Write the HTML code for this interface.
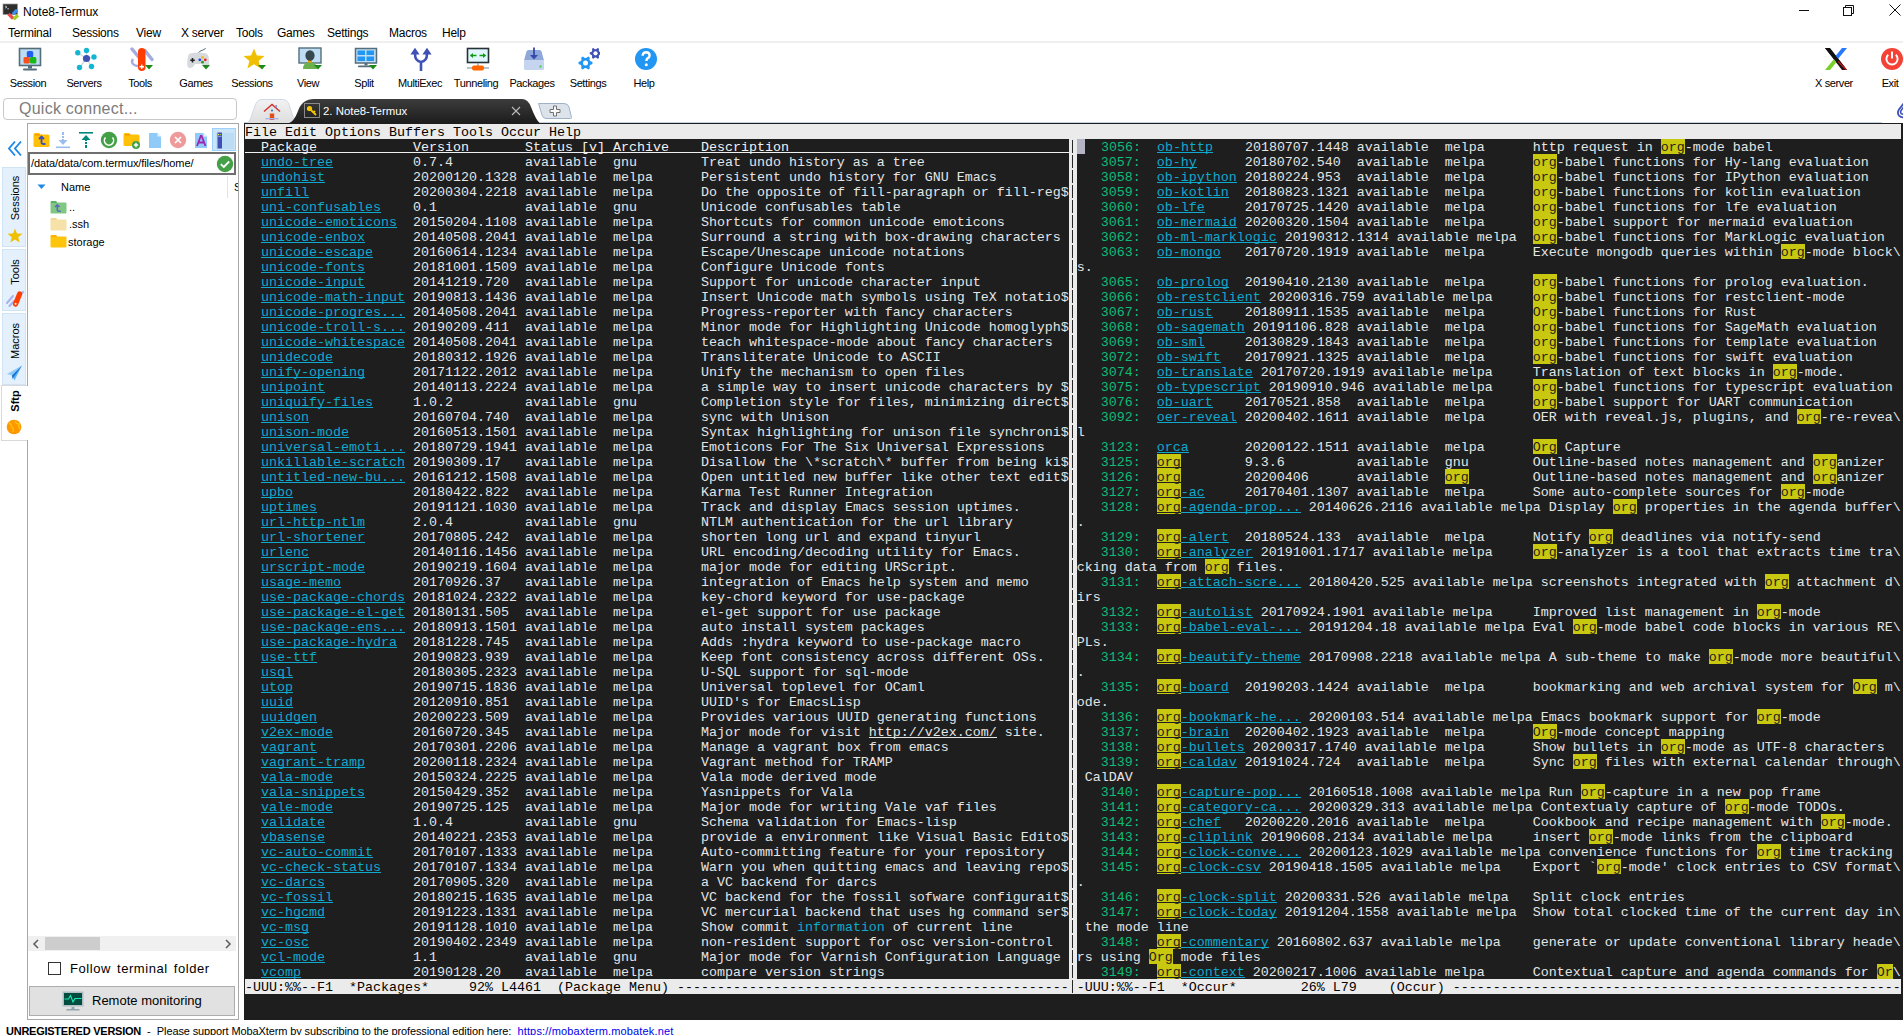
<!DOCTYPE html><html><head><meta charset="utf-8"><style>
*{box-sizing:border-box}
html,body{margin:0;padding:0}
body{width:1903px;height:1035px;position:relative;overflow:hidden;background:#fff;font-family:"Liberation Sans",sans-serif;color:#000}
.a{position:absolute;display:block}
#term{position:absolute;left:244px;top:123px;width:1659px;height:897px;background:#1e1e1e}
.b{position:absolute;height:15px;display:block}
.u{position:absolute;height:1px;display:block}
.lt{background:#ebebeb}
.yl{background:#c8c810}
.cu{background:#b4b4c4}
.hu{background:#f0f0f0}
.vb{position:absolute;display:block;left:1072px;width:1px;height:13px;background:#262626}
.lu{background:#11a8cd}
.du{background:#1e1e1e}
.nu{background:#e5e5e5}
.tr{position:absolute;left:245px;height:15px;line-height:17px;white-space:pre;font-family:"Liberation Mono",monospace;font-size:13.333px;color:#e5e5e5}
.tr .m{color:#000}
.tr .h{color:#f2f2f2}
.tr .l{color:#11a8cd}
.tr .g{color:#0dbc79}
.tr .hk{color:#1e1e1e}
.t12{font-size:12px;line-height:16px;white-space:nowrap}
.tl{top:77px;width:80px;text-align:center;font-size:11px;line-height:13px;white-space:nowrap;letter-spacing:-0.4px}
.vt{width:80px;height:16px;line-height:16px;text-align:center;font-size:11px;transform:rotate(-90deg);white-space:nowrap}
</style></head><body>
<svg class="a" style="left:2px;top:3px" width="18" height="17" viewBox="0 0 18 17"><rect x="1" y="1" width="14.5" height="10.5" fill="#2e2e2e" stroke="#9a9a9a" stroke-width="0.7"/><path d="M3 2.8 L5 4 L3 5.2 M5.2 5.8 H7" stroke="#ddd" stroke-width="0.8" fill="none"/><path d="M6.5 10.8 L11.2 15.5" stroke="#e84b4b" stroke-width="3.2"/><path d="M10.8 11.2 L15.2 7" stroke="#3c8ef0" stroke-width="3.2"/><path d="M11.5 16.3 L16 12.2" stroke="#9fd022" stroke-width="3.2"/></svg>
<div class="a t12" style="left:23px;top:4px">Note8-Termux</div>
<div class="a" style="left:1799px;top:10px;width:10px;height:1px;background:#111"></div>
<svg class="a" style="left:1843px;top:4px" width="12" height="12" viewBox="0 0 12 12"><path d="M2.5 3.5 V1.5 H10.5 V9.5 H8.5" stroke="#111" fill="none"/><rect x="0.5" y="3.5" width="8" height="8" stroke="#111" fill="none"/></svg>
<svg class="a" style="left:1889px;top:4px" width="12" height="12" viewBox="0 0 12 12"><path d="M0.5 0.5 L11.5 11.5 M11.5 0.5 L0.5 11.5" stroke="#111" stroke-width="1"/></svg>
<div class="a t12" style="left:8px;top:25px;letter-spacing:-0.25px">Terminal</div>
<div class="a t12" style="left:72px;top:25px;letter-spacing:-0.25px">Sessions</div>
<div class="a t12" style="left:136px;top:25px;letter-spacing:-0.25px">View</div>
<div class="a t12" style="left:181px;top:25px;letter-spacing:-0.25px">X server</div>
<div class="a t12" style="left:236px;top:25px;letter-spacing:-0.25px">Tools</div>
<div class="a t12" style="left:277px;top:25px;letter-spacing:-0.25px">Games</div>
<div class="a t12" style="left:327px;top:25px;letter-spacing:-0.25px">Settings</div>
<div class="a t12" style="left:389px;top:25px;letter-spacing:-0.25px">Macros</div>
<div class="a t12" style="left:442px;top:25px;letter-spacing:-0.25px">Help</div>
<div class="a" style="left:0;top:41px;width:1903px;height:2px;background:#efefef"></div>
<div class="a tl" style="left:-12px">Session</div>
<div class="a tl" style="left:44px">Servers</div>
<div class="a tl" style="left:100px">Tools</div>
<div class="a tl" style="left:156px">Games</div>
<div class="a tl" style="left:212px">Sessions</div>
<div class="a tl" style="left:268px">View</div>
<div class="a tl" style="left:324px">Split</div>
<div class="a tl" style="left:380px">MultiExec</div>
<div class="a tl" style="left:436px">Tunneling</div>
<div class="a tl" style="left:492px">Packages</div>
<div class="a tl" style="left:548px">Settings</div>
<div class="a tl" style="left:604px">Help</div>
<div class="a tl" style="left:1794px">X server</div>
<div class="a tl" style="left:1850px">Exit</div>
<svg class="a" style="left:18px;top:47px" width="24" height="24" viewBox="0 0 24 24"><rect x="1.5" y="1.5" width="21" height="17" fill="#bfdcf5" stroke="#546e7a" stroke-width="1.6"/><rect x="10" y="19" width="4" height="2.5" fill="#546e7a"/><rect x="5" y="21.5" width="14" height="2" rx="1" fill="#546e7a"/><rect x="8.8" y="4" width="6.4" height="6.4" rx="1.5" fill="#1e5ff0"/><rect x="5.5" y="10" width="6.4" height="6.4" rx="1.5" fill="#f4511e"/><rect x="12" y="10" width="6.4" height="6.4" rx="1.5" fill="#18b818"/></svg>
<svg class="a" style="left:74px;top:47px" width="24" height="24" viewBox="0 0 24 24"><g stroke="#cfd8dc" stroke-width="1.3"><line x1="12.5" y1="11.5" x2="3.8" y2="5.8"/><line x1="12.5" y1="11.5" x2="12.5" y2="3.5"/><line x1="12.5" y1="11.5" x2="20" y2="10"/><line x1="12.5" y1="11.5" x2="5.5" y2="20.5"/><line x1="12.5" y1="11.5" x2="17.5" y2="19.5"/></g><g fill="#13b6d2"><circle cx="3.8" cy="5.8" r="2.7"/><circle cx="12.5" cy="3.5" r="2.7"/><circle cx="20" cy="10" r="2.7"/><circle cx="5.5" cy="20.5" r="2.7"/><circle cx="17.5" cy="19.5" r="2.7"/></g><circle cx="12.5" cy="11.5" r="3.6" fill="#3f51b5"/></svg>
<svg class="a" style="left:128px;top:47px" width="26" height="25" viewBox="0 0 26 25"><path d="M4 2 L11 10.5" stroke="#a4acdf" stroke-width="3.4" stroke-linecap="round"/><path d="M17 3.5 L24 12.5" stroke="#a4acdf" stroke-width="3.4" stroke-linecap="round"/><path d="M5 12 Q3 15 5 17 Q7 19 10 19" stroke="#a4acdf" stroke-width="2.4" fill="none"/><rect x="10" y="1" width="7.5" height="23" rx="3.75" fill="#ff3d00"/><path d="M13.75 17.5v4.5M11.5 19.75h4.5" stroke="#fff" stroke-width="1.4"/></svg>
<svg class="a" style="left:145px;top:65px" width="8" height="5" viewBox="0 0 8 5"><path d="M0 0h8l-4 4.5z" fill="#1b8a1b"/></svg>
<svg class="a" style="left:186px;top:47px" width="26" height="24" viewBox="0 0 26 24"><path d="M12.5 6 Q13 4 17 3 Q19 2.5 19.5 1" stroke="#546e7a" stroke-width="1" fill="none"/><path d="M4 6.5 Q12 4.5 20 6.5 Q23 7 23.2 15 Q23.5 21 20.5 21 Q18 21 16 17 H9 Q7 21 4 21 Q0.8 21 1.3 15 Q1.6 7 4 6.5z" fill="#d6d9dd"/><path d="M6.5 11v4.5M4.3 13.2h4.5" stroke="#222" stroke-width="1.6"/><circle cx="16.5" cy="10.3" r="1.4" fill="#e8c020"/><circle cx="13.8" cy="12.8" r="1.4" fill="#2040f0"/><circle cx="19.3" cy="12.8" r="1.4" fill="#f02020"/><circle cx="16.5" cy="15.2" r="1.4" fill="#20a020"/></svg>
<svg class="a" style="left:202px;top:65px" width="8" height="5" viewBox="0 0 8 5"><path d="M0 0h8l-4 4.5z" fill="#1b8a1b"/></svg>
<svg class="a" style="left:242px;top:47px" width="24" height="24" viewBox="0 0 24 24"><path d="M12 1.5 L14.9 8.6 L22.5 9 L16.6 13.9 L18.6 21.5 L12 17.3 L5.4 21.5 L7.4 13.9 L1.5 9 L9.1 8.6z" fill="#f0c000"/></svg>
<svg class="a" style="left:258px;top:65px" width="8" height="5" viewBox="0 0 8 5"><path d="M0 0h8l-4 4.5z" fill="#1b8a1b"/></svg>
<svg class="a" style="left:298px;top:47px" width="24" height="24" viewBox="0 0 24 24"><rect x="1" y="1" width="22" height="15" fill="#bfdcf5" stroke="#546e7a" stroke-width="1.4"/><path d="M5 22 Q5 15 12 15 Q19 15 19 22z" fill="#6ab04c"/><rect x="10" y="12.5" width="4" height="3" fill="#f59b00"/><ellipse cx="12" cy="8.5" rx="4.6" ry="5.3" fill="#37474f"/></svg>
<svg class="a" style="left:314px;top:65px" width="8" height="5" viewBox="0 0 8 5"><path d="M0 0h8l-4 4.5z" fill="#1b8a1b"/></svg>
<svg class="a" style="left:354px;top:47px" width="24" height="24" viewBox="0 0 24 24"><rect x="1.5" y="1.5" width="21" height="14.5" fill="#bfdcf5" stroke="#546e7a" stroke-width="1.5"/><g fill="#2196f3"><rect x="3.5" y="3.5" width="7.5" height="4.5"/><rect x="12.5" y="3.5" width="7.5" height="4.5"/><rect x="3.5" y="9.5" width="7.5" height="4.5"/><rect x="12.5" y="9.5" width="7.5" height="4.5"/></g><rect x="10.5" y="16" width="3" height="2.5" fill="#546e7a"/><rect x="4" y="18.5" width="16" height="1.8" rx="0.9" fill="#546e7a"/></svg>
<svg class="a" style="left:369px;top:65px" width="8" height="5" viewBox="0 0 8 5"><path d="M0 0h8l-4 4.5z" fill="#1b8a1b"/></svg>
<svg class="a" style="left:409px;top:47px" width="24" height="25" viewBox="0 0 24 25"><path d="M12 24 V15 M12 15 Q6 14 6 7 M12 15 Q18 14 18 7" stroke="#3f51b5" stroke-width="2.6" fill="none"/><path d="M6 0.8 L10.6 7.6 H1.4z M18 0.8 L22.6 7.6 H13.4z" fill="#3f51b5"/></svg>
<svg class="a" style="left:466px;top:47px" width="24" height="25" viewBox="0 0 24 25"><rect x="1.5" y="1.5" width="21" height="14" fill="#e1f5fe" stroke="#263238" stroke-width="1.6"/><path d="M4.5 8.5h6M13.5 8.5h6" stroke="#0c9c0c" stroke-width="1.6"/><path d="M4 8.5 L7 6 V11z M20 8.5 L17 6 V11z" fill="#0c9c0c"/><rect x="11.3" y="16" width="1.4" height="4" fill="#90a4ae"/><rect x="1" y="20.3" width="22" height="1.3" fill="#90a4ae"/><rect x="6" y="18.5" width="12" height="5" rx="2" fill="#ff6600"/></svg>
<svg class="a" style="left:522px;top:47px" width="24" height="25" viewBox="0 0 24 25"><path d="M4.5 4.5 Q5 3 6.5 3 H17.5 Q19 3 19.5 4.5 L22 13.5 H2z" fill="#8ea8d9"/><rect x="2" y="13.5" width="20" height="9.5" rx="1.5" fill="#c5d5f0"/><rect x="17.5" y="18.5" width="2" height="2" fill="#43d043"/><path d="M12 0.5 V10" stroke="#3949ab" stroke-width="1.8"/><path d="M8 8 L12 12.5 L16 8z" fill="#3949ab"/></svg>
<svg class="a" style="left:576px;top:47px" width="24" height="25" viewBox="0 0 24 25"><polygon points="16.44,15.09 16.44,16.92 14.15,17.93 13.50,19.07 13.76,21.56 12.17,22.47 10.15,21.00 8.84,21.00 6.82,22.46 5.23,21.55 5.50,19.06 4.84,17.92 2.56,16.91 2.56,15.08 4.85,14.07 5.50,12.93 5.24,10.44 6.83,9.53 8.85,11.00 10.16,11.00 12.18,9.54 13.77,10.45 13.50,12.94 14.16,14.08" fill="#2196f3"/><circle cx="9.5" cy="16" r="2.52" fill="#fff"/><polygon points="25.25,5.55 25.25,7.06 23.36,7.90 22.81,8.85 23.03,10.90 21.71,11.66 20.04,10.44 18.95,10.44 17.28,11.66 15.97,10.90 16.18,8.84 15.64,7.89 13.75,7.05 13.75,5.54 15.64,4.70 16.19,3.75 15.97,1.70 17.29,0.94 18.96,2.16 20.05,2.16 21.72,0.94 23.03,1.70 22.82,3.76 23.36,4.71" fill="#3f51b5"/><circle cx="19.5" cy="6.3" r="2.088" fill="#fff"/></svg>
<svg class="a" style="left:634px;top:47px" width="24" height="24" viewBox="0 0 24 24"><circle cx="12" cy="12" r="11" fill="#2196f3"/><path d="M8.6 8.8 Q8.8 5.2 12.2 5.2 Q15.6 5.3 15.6 8.4 Q15.6 10.3 13.5 11.4 Q12.4 12 12.4 14" stroke="#fff" stroke-width="2.4" fill="none"/><circle cx="12.3" cy="17.8" r="1.5" fill="#fff"/></svg>
<svg class="a" style="left:1824px;top:47px" width="24" height="24" viewBox="0 0 24 24"><path d="M1 1 H6 L23 23 H18z" fill="#111"/><path d="M18 1 H23 L14 12 L11.5 9z" fill="#2979ff"/><path d="M6 23 H1 L10 12 L12.5 15z" fill="#76d12a"/><path d="M14 12 L23 23 H19 L12.5 15z" fill="#e21b1b" opacity="0.9"/><path d="M1 1 H5.5 L23 23 H19z" fill="#111"/><path d="M14.5 14 L23 23 H21.5 L14 15z" fill="#e21b1b"/></svg>
<svg class="a" style="left:1880px;top:47px" width="23" height="24" viewBox="0 0 23 24"><circle cx="12" cy="12" r="11" fill="#f44336"/><path d="M8.2 7.8 A5.6 5.6 0 1 0 15.8 7.8" stroke="#fff" stroke-width="1.9" fill="none"/><path d="M12 4.5 V11.5" stroke="#fff" stroke-width="1.9"/></svg>
<svg class="a" style="left:1896px;top:101px" width="7" height="18" viewBox="0 0 7 18"><path d="M7.5 2.5 L2.8 8.8 Q0.9 12 3 14.6 Q5 16.6 7.5 16.3" stroke="#3f51b5" stroke-width="1.8" fill="none"/><path d="M7.5 6.2 L5 9.6 Q4.1 11.4 5.2 12.6 Q6.2 13.4 7.5 13.2" stroke="#3f51b5" stroke-width="1.6" fill="none"/></svg>
<div class="a" style="left:244px;top:122px;width:1638px;height:1px;background:#c3d3e3"></div>
<div class="a" style="left:3px;top:98px;width:234px;height:22px;border:1px solid #c8c8c8;border-radius:4px;background:#fff"></div>
<div class="a" style="left:19px;top:99px;font-size:16px;line-height:20px;color:#7c7c7c;letter-spacing:0.25px">Quick connect...</div>
<svg class="a" style="left:244px;top:98px" width="330" height="26" viewBox="0 0 330 26"><path d="M1.5 25.5 Q5 25 6.5 20.5 L11.5 6.5 Q13.5 1.5 18 1.5 H38.5 Q43 1.5 45 6.5 L49.5 20.5 Q51 25 53 25.5z" fill="url(#hg)" stroke="#cdd9e6" stroke-width="1"/><defs><linearGradient id="dg" x1="0" y1="0" x2="0" y2="1"><stop offset="0" stop-color="#3c3c3c"/><stop offset="1" stop-color="#1c1c1c"/></linearGradient><linearGradient id="hg" x1="0" y1="0" x2="0" y2="1"><stop offset="0" stop-color="#f2f2f2"/><stop offset="1" stop-color="#dedede"/></linearGradient></defs><path d="M44 25.5 Q50 24 54 13 Q58 1 70 1 H278 Q284 1 287 9 Q292 22 296 25.5z" fill="url(#dg)"/><path d="M294.5 5.5 H320 Q324 5.5 325 9 L327.5 19.5 Q328 20.5 326.5 20.5 H302 Q299 20.5 298 17z" fill="#dde3ea" stroke="#9fb3c8" stroke-width="1"/></svg>
<svg class="a" style="left:263px;top:102px" width="18" height="19" viewBox="0 0 18 19"><path d="M3 10 V17 H15 V10 L9 4z" fill="#e3e3e3"/><rect x="6.8" y="11.5" width="4.4" height="6.5" fill="#e64a19"/><rect x="2.5" y="16" width="13" height="1.4" fill="#aab4f0"/><path d="M1 9.5 L9 2.5 L17 9.5" stroke="#d32f2f" stroke-width="1.4" fill="none"/><rect x="12.5" y="3" width="1.3" height="3" fill="#7986cb"/><circle cx="9" cy="8.5" r="0.9" fill="#1565c0"/></svg>
<div class="a" style="left:304px;top:103px;width:16px;height:15px;border:1px solid #8a8a8a"></div>
<svg class="a" style="left:305px;top:104px" width="14" height="13" viewBox="0 0 14 13"><circle cx="4.5" cy="4.5" r="2.6" fill="#f5c400"/><path d="M5.5 5.5 L11 11 M8.5 8.5 L10 7" stroke="#f5c400" stroke-width="1.8"/></svg>
<div class="a" style="left:323px;top:103px;font-size:11.4px;line-height:16px;color:#fff">2. Note8-Termux</div>
<svg class="a" style="left:511px;top:106px" width="10" height="10" viewBox="0 0 10 10"><path d="M1 1 L9 9 M9 1 L1 9" stroke="#bbb" stroke-width="1.1"/></svg>
<svg class="a" style="left:549px;top:105px" width="12" height="12" viewBox="0 0 12 12"><path d="M4.5 1 H7.5 V4.5 H11 V7.5 H7.5 V11 H4.5 V7.5 H1 V4.5 H4.5z" fill="#fafafa" stroke="#707070" stroke-width="1"/></svg>
<svg class="a" style="left:7px;top:140px" width="16" height="17" viewBox="0 0 16 17"><path d="M8 1.5 L2 8.5 L8 15.5 M14 1.5 L8 8.5 L14 15.5" stroke="#1e88e5" stroke-width="1.9" fill="none"/></svg>
<div class="a" style="left:2px;top:167px;width:24px;height:80px;background:#e4f0fb;border:1px solid #d0e3f5"></div>
<div class="a" style="left:2px;top:249px;width:24px;height:62px;background:#e4f0fb;border:1px solid #d0e3f5"></div>
<div class="a" style="left:2px;top:313px;width:24px;height:72px;background:#e4f0fb;border:1px solid #d0e3f5"></div>
<div class="a" style="left:1px;top:385px;width:28px;height:56px;background:#fff;border:1px solid #d9d9d9;border-right:none"></div>
<div class="a vt" style="left:-25px;top:190px;">Sessions</div>
<div class="a vt" style="left:-25px;top:264px;">Tools</div>
<div class="a vt" style="left:-25px;top:333px;">Macros</div>
<div class="a vt" style="left:-25px;top:393px;font-weight:bold;">Sftp</div>
<svg class="a" style="left:7px;top:228px" width="16" height="15" viewBox="0 0 16 15"><path d="M8 0.5 L10 5.5 L15.5 5.8 L11.2 9.2 L12.7 14.5 L8 11.5 L3.3 14.5 L4.8 9.2 L0.5 5.8 L6 5.5z" fill="#f0c000"/></svg>
<svg class="a" style="left:5px;top:289px" width="19" height="19" viewBox="0 0 19 19"><path d="M2 14 L8 7 M4.5 17 L9 12 M12 9 L18 3" stroke="#aab2e8" stroke-width="2" stroke-linecap="round"/><g transform="rotate(22 12.5 10)"><rect x="10" y="2" width="5.2" height="16" rx="2.6" fill="#ff3d00"/><circle cx="12.6" cy="15.2" r="1" fill="#fff"/></g></svg>
<svg class="a" style="left:6px;top:365px" width="17" height="16" viewBox="0 0 17 16"><path d="M16 0.5 L1 9 L6 10.5z" fill="#90caf9"/><path d="M16 0.5 L6 10.5 L8.5 15.5z" fill="#64b5f6"/><path d="M16 0.5 L6 10.5 L6.5 14z" fill="#1976d2"/></svg>
<svg class="a" style="left:6px;top:419px" width="16" height="16" viewBox="0 0 16 16"><circle cx="8" cy="8" r="7.3" fill="#ff9800"/><path d="M3 4 Q6 5 5.5 8 Q8 9 7 13 M9 2 Q10 5 13 5 Q12 8 14 10" stroke="#ffc107" stroke-width="1.4" fill="none"/></svg>
<div class="a" style="left:27px;top:123px;width:212px;height:897px;border:1px solid #a8a8a8;background:#fff"></div>
<div class="a" style="left:26px;top:386px;width:3px;height:54px;background:#fff"></div>
<svg class="a" style="left:33px;top:131px" width="17" height="17" viewBox="0 0 17 17"><path d="M0.5 3.5 Q0.5 2 2 2 H6 L7.5 3.5 H15 Q16.5 3.5 16.5 5 V15 Q16.5 16 15 16 H2 Q0.5 16 0.5 15z" fill="#ffc107"/><path d="M2 3 H6.5 L8 4.5 H2z" fill="#ff9800"/><path d="M6 8 L8.5 5.5 L11 8 M8.5 6 V11.5 Q8.5 13 10.5 13 H12.5" stroke="#3f51b5" stroke-width="1.8" fill="none"/></svg>
<svg class="a" style="left:55px;top:131px" width="16" height="18" viewBox="0 0 16 18"><path d="M8 1 V4 M8 5 V7 M8 8 V12" stroke="#9bbcef" stroke-width="2"/><path d="M3.5 9 L8 14 L12.5 9z" fill="#9bbcef"/><rect x="1" y="15.5" width="14" height="1.6" fill="#9bbcef"/></svg>
<svg class="a" style="left:78px;top:131px" width="16" height="18" viewBox="0 0 16 18"><rect x="1" y="1" width="14" height="1.6" fill="#00897b"/><path d="M3.5 9 L8 4 L12.5 9z" fill="#00897b"/><path d="M8 8 V10 M8 11 V13 M8 14 V17" stroke="#00897b" stroke-width="2"/></svg>
<svg class="a" style="left:100px;top:131px" width="18" height="18" viewBox="0 0 18 18"><circle cx="9" cy="9" r="8.2" fill="#43a047"/><path d="M5.5 6.5 A4.6 4.6 0 1 0 12.5 6.5" stroke="#fff" stroke-width="1.6" fill="none"/></svg>
<svg class="a" style="left:123px;top:131px" width="18" height="18" viewBox="0 0 18 18"><path d="M0.5 3.5 Q0.5 2 2 2 H6 L7.5 3.5 H15 Q16.5 3.5 16.5 5 V14 Q16.5 15 15 15 H2 Q0.5 15 0.5 14z" fill="#ffc107"/><path d="M2 3 H6.5 L8 4.5 H2z" fill="#ff9800"/><circle cx="13" cy="14" r="4" fill="#43a047"/><path d="M13 11.8 V16.2 M10.8 14 H15.2" stroke="#fff" stroke-width="1.4"/></svg>
<svg class="a" style="left:148px;top:131px" width="14" height="18" viewBox="0 0 14 18"><path d="M1 2 H9.5 L13 5.5 V17 H1z" fill="#90caf9"/><path d="M9.5 2 V5.5 H13z" fill="#e3f2fd"/></svg>
<svg class="a" style="left:169px;top:131px" width="18" height="18" viewBox="0 0 18 18"><circle cx="9" cy="9" r="8.2" fill="#ef9a9a"/><path d="M6 6 L12 12 M12 6 L6 12" stroke="#fff" stroke-width="1.7"/></svg>
<svg class="a" style="left:194px;top:131px" width="14" height="18" viewBox="0 0 14 18"><path d="M1 2 H9.5 L13 5.5 V17 H1z" fill="#90caf9"/><path d="M9.5 2 V5.5 H13z" fill="#e3f2fd"/><path d="M3 15 L6.8 5 H7.6 L11.5 15 M4.5 11.5 H10" stroke="#9c27b0" stroke-width="1.8" fill="none"/></svg>
<div class="a" style="left:212px;top:128px;width:24px;height:23px;background:#cce4f7;border:1px solid #99d1ff"></div>
<div class="a" style="left:216px;top:133px;width:18px;height:16px;background:#bcdcf5"></div>
<svg class="a" style="left:217px;top:132px" width="6" height="17" viewBox="0 0 6 17"><rect x="0.5" y="0.5" width="4.5" height="16" fill="#3f4fb5"/><rect x="1" y="2" width="1.2" height="1.2" fill="#ffeb3b"/><rect x="3" y="2" width="1.2" height="1.2" fill="#8bc34a"/><rect x="1" y="4" width="3.5" height="0.8" fill="#9fa8da"/></svg>
<div class="a" style="left:28px;top:152px;width:208px;height:23px;border:2px solid #6f6f6f;background:#fff"></div>
<div class="a" style="left:31px;top:157px;font-size:11px;line-height:13px;letter-spacing:-0.1px">/data/data/com.termux/files/home/</div>
<svg class="a" style="left:216px;top:155px" width="18" height="18" viewBox="0 0 18 18"><circle cx="9" cy="9" r="8.2" fill="#43a047"/><path d="M4.8 9.2 L7.8 12 L13.2 6.5" stroke="#fff" stroke-width="1.8" fill="none"/></svg>
<svg class="a" style="left:37px;top:184px" width="9" height="6" viewBox="0 0 9 6"><path d="M0.5 0.5 H8.5 L4.5 5z" fill="#1e88e5"/></svg>
<div class="a" style="left:61px;top:181px;font-size:11px;line-height:13px">Name</div>
<div class="a" style="left:227px;top:176px;width:1px;height:22px;background:#e5e5e5"></div>
<div class="a" style="left:234px;top:181px;width:4px;overflow:hidden;font-size:11px;line-height:13px">S</div>
<svg class="a" style="left:50px;top:200px" width="17" height="15" viewBox="0 0 17 15"><path d="M0.5 2 Q0.5 1 1.5 1 H6 L7.5 2.5 H15.5 Q16.5 2.5 16.5 3.5 V12.5 Q16.5 13.5 15.5 13.5 H1.5 Q0.5 13.5 0.5 12.5z" fill="#81c784"/><path d="M1 1.5 H6 L7 2.5 H1z" fill="#2e9e3e"/><path d="M5 7 L7.3 4.8 L9.6 7 M7.3 5.2 V10 Q7.3 11.3 9 11.3 H10.8" stroke="#5c6bc0" stroke-width="1.6" fill="none"/></svg>
<div class="a" style="left:69px;top:201px;font-size:11px;line-height:13px">..</div>
<svg class="a" style="left:50px;top:217px" width="17" height="14" viewBox="0 0 17 14"><path d="M0.5 2 Q0.5 1 1.5 1 H6 L7.5 2.5 H15.5 Q16.5 2.5 16.5 3.5 V12.5 Q16.5 13.5 15.5 13.5 H1.5 Q0.5 13.5 0.5 12.5z" fill="#f6e2a8"/><path d="M1 1.5 H6 L7 2.5 H1z" fill="#f3cd82"/></svg>
<div class="a" style="left:69px;top:218px;font-size:11px;line-height:13px">.ssh</div>
<svg class="a" style="left:50px;top:234px" width="17" height="14" viewBox="0 0 17 14"><path d="M0.5 2 Q0.5 1 1.5 1 H6 L7.5 2.5 H15.5 Q16.5 2.5 16.5 3.5 V12.5 Q16.5 13.5 15.5 13.5 H1.5 Q0.5 13.5 0.5 12.5z" fill="#ffc40c"/><path d="M1 1.5 H6 L7 2.5 H1z" fill="#ff9a00"/></svg>
<div class="a" style="left:68px;top:236px;font-size:11px;line-height:13px">storage</div>
<div class="a" style="left:28px;top:936px;width:208px;height:15px;background:#f0f0f0"></div>
<div class="a" style="left:45px;top:937px;width:55px;height:13px;background:#cdcdcd"></div>
<svg class="a" style="left:32px;top:939px" width="8" height="10" viewBox="0 0 8 10"><path d="M6 1 L2 5 L6 9" stroke="#606060" stroke-width="1.6" fill="none"/></svg>
<svg class="a" style="left:224px;top:939px" width="8" height="10" viewBox="0 0 8 10"><path d="M2 1 L6 5 L2 9" stroke="#606060" stroke-width="1.6" fill="none"/></svg>
<div class="a" style="left:48px;top:962px;width:13px;height:13px;border:1px solid #333;background:#fff"></div>
<div class="a" style="left:70px;top:961px;font-size:13px;line-height:15px;word-spacing:2px;letter-spacing:0.55px">Follow terminal folder</div>
<div class="a" style="left:29px;top:986px;width:206px;height:30px;background:#e1e1e1;border:1px solid #adadad"></div>
<svg class="a" style="left:62px;top:991px" width="23" height="21" viewBox="0 0 23 21"><rect x="0.5" y="0.5" width="21" height="15" fill="#b0bec5"/><rect x="2" y="2" width="18" height="12" fill="#004d40"/><path d="M2.5 8 H6.5 L8.5 4.5 L11 11 L13 7.5 H19.5" stroke="#1de9b6" stroke-width="1.1" fill="none"/><rect x="9.5" y="16" width="3" height="2" fill="#90a4ae"/><rect x="4.5" y="18" width="13" height="1.5" fill="#90a4ae"/></svg>
<div class="a" style="left:92px;top:993px;font-size:13px;line-height:15px">Remote monitoring</div>
<div id="term"></div>
<i class="b lt" style="left:245px;top:124px;width:1656px"></i>
<i class="b yl" style="left:1661px;top:139px;width:24px"></i>
<i class="b yl" style="left:1533px;top:154px;width:24px"></i>
<i class="b yl" style="left:1533px;top:169px;width:24px"></i>
<i class="b yl" style="left:1533px;top:184px;width:24px"></i>
<i class="b yl" style="left:1533px;top:199px;width:24px"></i>
<i class="b yl" style="left:1533px;top:214px;width:24px"></i>
<i class="b yl" style="left:1533px;top:229px;width:24px"></i>
<i class="b yl" style="left:1781px;top:244px;width:24px"></i>
<i class="b yl" style="left:1533px;top:274px;width:24px"></i>
<i class="b yl" style="left:1533px;top:289px;width:24px"></i>
<i class="b yl" style="left:1533px;top:304px;width:24px"></i>
<i class="b yl" style="left:1533px;top:319px;width:24px"></i>
<i class="b yl" style="left:1533px;top:334px;width:24px"></i>
<i class="b yl" style="left:1533px;top:349px;width:24px"></i>
<i class="b yl" style="left:1773px;top:364px;width:24px"></i>
<i class="b yl" style="left:1533px;top:379px;width:24px"></i>
<i class="b yl" style="left:1533px;top:394px;width:24px"></i>
<i class="b yl" style="left:1797px;top:409px;width:24px"></i>
<i class="b yl" style="left:1533px;top:439px;width:24px"></i>
<i class="b yl" style="left:1157px;top:454px;width:24px"></i>
<i class="b yl" style="left:1813px;top:454px;width:24px"></i>
<i class="b yl" style="left:1157px;top:469px;width:24px"></i>
<i class="b yl" style="left:1445px;top:469px;width:24px"></i>
<i class="b yl" style="left:1813px;top:469px;width:24px"></i>
<i class="b yl" style="left:1157px;top:484px;width:24px"></i>
<i class="b yl" style="left:1781px;top:484px;width:24px"></i>
<i class="b yl" style="left:1157px;top:499px;width:24px"></i>
<i class="b yl" style="left:1613px;top:499px;width:24px"></i>
<i class="b yl" style="left:1157px;top:529px;width:24px"></i>
<i class="b yl" style="left:1589px;top:529px;width:24px"></i>
<i class="b yl" style="left:1157px;top:544px;width:24px"></i>
<i class="b yl" style="left:1533px;top:544px;width:24px"></i>
<i class="b yl" style="left:1205px;top:559px;width:24px"></i>
<i class="b yl" style="left:1157px;top:574px;width:24px"></i>
<i class="b yl" style="left:1765px;top:574px;width:24px"></i>
<i class="b yl" style="left:1157px;top:604px;width:24px"></i>
<i class="b yl" style="left:1757px;top:604px;width:24px"></i>
<i class="b yl" style="left:1157px;top:619px;width:24px"></i>
<i class="b yl" style="left:1573px;top:619px;width:24px"></i>
<i class="b yl" style="left:1157px;top:649px;width:24px"></i>
<i class="b yl" style="left:1709px;top:649px;width:24px"></i>
<i class="b yl" style="left:1157px;top:679px;width:24px"></i>
<i class="b yl" style="left:1853px;top:679px;width:24px"></i>
<i class="b yl" style="left:1157px;top:709px;width:24px"></i>
<i class="b yl" style="left:1757px;top:709px;width:24px"></i>
<i class="b yl" style="left:1157px;top:724px;width:24px"></i>
<i class="b yl" style="left:1533px;top:724px;width:24px"></i>
<i class="b yl" style="left:1157px;top:739px;width:24px"></i>
<i class="b yl" style="left:1661px;top:739px;width:24px"></i>
<i class="b yl" style="left:1157px;top:754px;width:24px"></i>
<i class="b yl" style="left:1573px;top:754px;width:24px"></i>
<i class="b yl" style="left:1157px;top:784px;width:24px"></i>
<i class="b yl" style="left:1581px;top:784px;width:24px"></i>
<i class="b yl" style="left:1157px;top:799px;width:24px"></i>
<i class="b yl" style="left:1725px;top:799px;width:24px"></i>
<i class="b yl" style="left:1157px;top:814px;width:24px"></i>
<i class="b yl" style="left:1821px;top:814px;width:24px"></i>
<i class="b yl" style="left:1157px;top:829px;width:24px"></i>
<i class="b yl" style="left:1589px;top:829px;width:24px"></i>
<i class="b yl" style="left:1157px;top:844px;width:24px"></i>
<i class="b yl" style="left:1757px;top:844px;width:24px"></i>
<i class="b yl" style="left:1157px;top:859px;width:24px"></i>
<i class="b yl" style="left:1597px;top:859px;width:24px"></i>
<i class="b yl" style="left:1157px;top:889px;width:24px"></i>
<i class="b yl" style="left:1157px;top:904px;width:24px"></i>
<i class="b yl" style="left:1157px;top:934px;width:24px"></i>
<i class="b yl" style="left:1149px;top:949px;width:24px"></i>
<i class="b yl" style="left:1157px;top:964px;width:24px"></i>
<i class="b yl" style="left:1877px;top:964px;width:16px"></i>
<i class="b lt" style="left:1069px;top:139px;width:8px"></i>
<i class="b lt" style="left:1069px;top:154px;width:8px"></i>
<i class="b lt" style="left:1069px;top:169px;width:8px"></i>
<i class="b lt" style="left:1069px;top:184px;width:8px"></i>
<i class="b lt" style="left:1069px;top:199px;width:8px"></i>
<i class="b lt" style="left:1069px;top:214px;width:8px"></i>
<i class="b lt" style="left:1069px;top:229px;width:8px"></i>
<i class="b lt" style="left:1069px;top:244px;width:8px"></i>
<i class="b lt" style="left:1069px;top:259px;width:8px"></i>
<i class="b lt" style="left:1069px;top:274px;width:8px"></i>
<i class="b lt" style="left:1069px;top:289px;width:8px"></i>
<i class="b lt" style="left:1069px;top:304px;width:8px"></i>
<i class="b lt" style="left:1069px;top:319px;width:8px"></i>
<i class="b lt" style="left:1069px;top:334px;width:8px"></i>
<i class="b lt" style="left:1069px;top:349px;width:8px"></i>
<i class="b lt" style="left:1069px;top:364px;width:8px"></i>
<i class="b lt" style="left:1069px;top:379px;width:8px"></i>
<i class="b lt" style="left:1069px;top:394px;width:8px"></i>
<i class="b lt" style="left:1069px;top:409px;width:8px"></i>
<i class="b lt" style="left:1069px;top:424px;width:8px"></i>
<i class="b lt" style="left:1069px;top:439px;width:8px"></i>
<i class="b lt" style="left:1069px;top:454px;width:8px"></i>
<i class="b lt" style="left:1069px;top:469px;width:8px"></i>
<i class="b lt" style="left:1069px;top:484px;width:8px"></i>
<i class="b lt" style="left:1069px;top:499px;width:8px"></i>
<i class="b lt" style="left:1069px;top:514px;width:8px"></i>
<i class="b lt" style="left:1069px;top:529px;width:8px"></i>
<i class="b lt" style="left:1069px;top:544px;width:8px"></i>
<i class="b lt" style="left:1069px;top:559px;width:8px"></i>
<i class="b lt" style="left:1069px;top:574px;width:8px"></i>
<i class="b lt" style="left:1069px;top:589px;width:8px"></i>
<i class="b lt" style="left:1069px;top:604px;width:8px"></i>
<i class="b lt" style="left:1069px;top:619px;width:8px"></i>
<i class="b lt" style="left:1069px;top:634px;width:8px"></i>
<i class="b lt" style="left:1069px;top:649px;width:8px"></i>
<i class="b lt" style="left:1069px;top:664px;width:8px"></i>
<i class="b lt" style="left:1069px;top:679px;width:8px"></i>
<i class="b lt" style="left:1069px;top:694px;width:8px"></i>
<i class="b lt" style="left:1069px;top:709px;width:8px"></i>
<i class="b lt" style="left:1069px;top:724px;width:8px"></i>
<i class="b lt" style="left:1069px;top:739px;width:8px"></i>
<i class="b lt" style="left:1069px;top:754px;width:8px"></i>
<i class="b lt" style="left:1069px;top:769px;width:8px"></i>
<i class="b lt" style="left:1069px;top:784px;width:8px"></i>
<i class="b lt" style="left:1069px;top:799px;width:8px"></i>
<i class="b lt" style="left:1069px;top:814px;width:8px"></i>
<i class="b lt" style="left:1069px;top:829px;width:8px"></i>
<i class="b lt" style="left:1069px;top:844px;width:8px"></i>
<i class="b lt" style="left:1069px;top:859px;width:8px"></i>
<i class="b lt" style="left:1069px;top:874px;width:8px"></i>
<i class="b lt" style="left:1069px;top:889px;width:8px"></i>
<i class="b lt" style="left:1069px;top:904px;width:8px"></i>
<i class="b lt" style="left:1069px;top:919px;width:8px"></i>
<i class="b lt" style="left:1069px;top:934px;width:8px"></i>
<i class="b lt" style="left:1069px;top:949px;width:8px"></i>
<i class="b lt" style="left:1069px;top:964px;width:8px"></i>
<i class="b lt" style="left:1069px;top:979px;width:8px"></i>
<i class="b lt" style="left:245px;top:979px;width:1656px"></i>
<i class="b cu" style="left:1077px;top:139px;width:8px"></i>
<i class="u hu" style="left:245px;top:152px;width:824px"></i>
<i class="u lu" style="left:261px;top:167px;width:72px"></i>
<i class="u lu" style="left:261px;top:182px;width:64px"></i>
<i class="u lu" style="left:261px;top:197px;width:48px"></i>
<i class="u lu" style="left:261px;top:212px;width:120px"></i>
<i class="u lu" style="left:261px;top:227px;width:136px"></i>
<i class="u lu" style="left:261px;top:242px;width:104px"></i>
<i class="u lu" style="left:261px;top:257px;width:112px"></i>
<i class="u lu" style="left:261px;top:272px;width:104px"></i>
<i class="u lu" style="left:261px;top:287px;width:104px"></i>
<i class="u lu" style="left:261px;top:302px;width:144px"></i>
<i class="u lu" style="left:261px;top:317px;width:144px"></i>
<i class="u lu" style="left:261px;top:332px;width:144px"></i>
<i class="u lu" style="left:261px;top:347px;width:144px"></i>
<i class="u lu" style="left:261px;top:362px;width:72px"></i>
<i class="u lu" style="left:261px;top:377px;width:104px"></i>
<i class="u lu" style="left:261px;top:392px;width:64px"></i>
<i class="u lu" style="left:261px;top:407px;width:112px"></i>
<i class="u lu" style="left:261px;top:422px;width:48px"></i>
<i class="u lu" style="left:261px;top:437px;width:88px"></i>
<i class="u lu" style="left:261px;top:452px;width:144px"></i>
<i class="u lu" style="left:261px;top:467px;width:144px"></i>
<i class="u lu" style="left:261px;top:482px;width:144px"></i>
<i class="u lu" style="left:261px;top:497px;width:32px"></i>
<i class="u lu" style="left:261px;top:512px;width:56px"></i>
<i class="u lu" style="left:261px;top:527px;width:104px"></i>
<i class="u lu" style="left:261px;top:542px;width:104px"></i>
<i class="u lu" style="left:261px;top:557px;width:48px"></i>
<i class="u lu" style="left:261px;top:572px;width:104px"></i>
<i class="u lu" style="left:261px;top:587px;width:80px"></i>
<i class="u lu" style="left:261px;top:602px;width:144px"></i>
<i class="u lu" style="left:261px;top:617px;width:144px"></i>
<i class="u lu" style="left:261px;top:632px;width:144px"></i>
<i class="u lu" style="left:261px;top:647px;width:136px"></i>
<i class="u lu" style="left:261px;top:662px;width:56px"></i>
<i class="u lu" style="left:261px;top:677px;width:32px"></i>
<i class="u lu" style="left:261px;top:692px;width:32px"></i>
<i class="u lu" style="left:261px;top:707px;width:32px"></i>
<i class="u lu" style="left:261px;top:722px;width:56px"></i>
<i class="u lu" style="left:261px;top:737px;width:72px"></i>
<i class="u nu" style="left:869px;top:737px;width:128px"></i>
<i class="u lu" style="left:261px;top:752px;width:56px"></i>
<i class="u lu" style="left:261px;top:767px;width:104px"></i>
<i class="u lu" style="left:261px;top:782px;width:72px"></i>
<i class="u lu" style="left:261px;top:797px;width:104px"></i>
<i class="u lu" style="left:261px;top:812px;width:72px"></i>
<i class="u lu" style="left:261px;top:827px;width:64px"></i>
<i class="u lu" style="left:261px;top:842px;width:64px"></i>
<i class="u lu" style="left:261px;top:857px;width:112px"></i>
<i class="u lu" style="left:261px;top:872px;width:120px"></i>
<i class="u lu" style="left:261px;top:887px;width:64px"></i>
<i class="u lu" style="left:261px;top:902px;width:72px"></i>
<i class="u lu" style="left:261px;top:917px;width:64px"></i>
<i class="u lu" style="left:261px;top:932px;width:48px"></i>
<i class="u lu" style="left:261px;top:947px;width:48px"></i>
<i class="u lu" style="left:261px;top:962px;width:64px"></i>
<i class="u lu" style="left:261px;top:977px;width:40px"></i>
<i class="u lu" style="left:1157px;top:152px;width:56px"></i>
<i class="u lu" style="left:1157px;top:167px;width:40px"></i>
<i class="u lu" style="left:1157px;top:182px;width:80px"></i>
<i class="u lu" style="left:1157px;top:197px;width:72px"></i>
<i class="u lu" style="left:1157px;top:212px;width:48px"></i>
<i class="u lu" style="left:1157px;top:227px;width:80px"></i>
<i class="u lu" style="left:1157px;top:242px;width:120px"></i>
<i class="u lu" style="left:1157px;top:257px;width:64px"></i>
<i class="u lu" style="left:1157px;top:287px;width:72px"></i>
<i class="u lu" style="left:1157px;top:302px;width:104px"></i>
<i class="u lu" style="left:1157px;top:317px;width:56px"></i>
<i class="u lu" style="left:1157px;top:332px;width:88px"></i>
<i class="u lu" style="left:1157px;top:347px;width:48px"></i>
<i class="u lu" style="left:1157px;top:362px;width:64px"></i>
<i class="u lu" style="left:1157px;top:377px;width:96px"></i>
<i class="u lu" style="left:1157px;top:392px;width:104px"></i>
<i class="u lu" style="left:1157px;top:407px;width:56px"></i>
<i class="u lu" style="left:1157px;top:422px;width:80px"></i>
<i class="u lu" style="left:1157px;top:452px;width:32px"></i>
<i class="u du" style="left:1157px;top:467px;width:24px"></i>
<i class="u du" style="left:1157px;top:482px;width:24px"></i>
<i class="u du" style="left:1157px;top:497px;width:24px"></i>
<i class="u lu" style="left:1181px;top:497px;width:24px"></i>
<i class="u du" style="left:1157px;top:512px;width:24px"></i>
<i class="u lu" style="left:1181px;top:512px;width:120px"></i>
<i class="u du" style="left:1157px;top:542px;width:24px"></i>
<i class="u lu" style="left:1181px;top:542px;width:48px"></i>
<i class="u du" style="left:1157px;top:557px;width:24px"></i>
<i class="u lu" style="left:1181px;top:557px;width:72px"></i>
<i class="u du" style="left:1157px;top:587px;width:24px"></i>
<i class="u lu" style="left:1181px;top:587px;width:120px"></i>
<i class="u du" style="left:1157px;top:617px;width:24px"></i>
<i class="u lu" style="left:1181px;top:617px;width:72px"></i>
<i class="u du" style="left:1157px;top:632px;width:24px"></i>
<i class="u lu" style="left:1181px;top:632px;width:120px"></i>
<i class="u du" style="left:1157px;top:662px;width:24px"></i>
<i class="u lu" style="left:1181px;top:662px;width:120px"></i>
<i class="u du" style="left:1157px;top:692px;width:24px"></i>
<i class="u lu" style="left:1181px;top:692px;width:48px"></i>
<i class="u du" style="left:1157px;top:722px;width:24px"></i>
<i class="u lu" style="left:1181px;top:722px;width:120px"></i>
<i class="u du" style="left:1157px;top:737px;width:24px"></i>
<i class="u lu" style="left:1181px;top:737px;width:48px"></i>
<i class="u du" style="left:1157px;top:752px;width:24px"></i>
<i class="u lu" style="left:1181px;top:752px;width:64px"></i>
<i class="u du" style="left:1157px;top:767px;width:24px"></i>
<i class="u lu" style="left:1181px;top:767px;width:56px"></i>
<i class="u du" style="left:1157px;top:797px;width:24px"></i>
<i class="u lu" style="left:1181px;top:797px;width:120px"></i>
<i class="u du" style="left:1157px;top:812px;width:24px"></i>
<i class="u lu" style="left:1181px;top:812px;width:120px"></i>
<i class="u du" style="left:1157px;top:827px;width:24px"></i>
<i class="u lu" style="left:1181px;top:827px;width:40px"></i>
<i class="u du" style="left:1157px;top:842px;width:24px"></i>
<i class="u lu" style="left:1181px;top:842px;width:72px"></i>
<i class="u du" style="left:1157px;top:857px;width:24px"></i>
<i class="u lu" style="left:1181px;top:857px;width:120px"></i>
<i class="u du" style="left:1157px;top:872px;width:24px"></i>
<i class="u lu" style="left:1181px;top:872px;width:80px"></i>
<i class="u du" style="left:1157px;top:902px;width:24px"></i>
<i class="u lu" style="left:1181px;top:902px;width:96px"></i>
<i class="u du" style="left:1157px;top:917px;width:24px"></i>
<i class="u lu" style="left:1181px;top:917px;width:96px"></i>
<i class="u du" style="left:1157px;top:947px;width:24px"></i>
<i class="u lu" style="left:1181px;top:947px;width:88px"></i>
<i class="u du" style="left:1157px;top:977px;width:24px"></i>
<i class="u lu" style="left:1181px;top:977px;width:64px"></i>
<i class="vb" style="top:140px"></i>
<i class="vb" style="top:155px"></i>
<i class="vb" style="top:170px"></i>
<i class="vb" style="top:185px"></i>
<i class="vb" style="top:200px"></i>
<i class="vb" style="top:215px"></i>
<i class="vb" style="top:230px"></i>
<i class="vb" style="top:245px"></i>
<i class="vb" style="top:260px"></i>
<i class="vb" style="top:275px"></i>
<i class="vb" style="top:290px"></i>
<i class="vb" style="top:305px"></i>
<i class="vb" style="top:320px"></i>
<i class="vb" style="top:335px"></i>
<i class="vb" style="top:350px"></i>
<i class="vb" style="top:365px"></i>
<i class="vb" style="top:380px"></i>
<i class="vb" style="top:395px"></i>
<i class="vb" style="top:410px"></i>
<i class="vb" style="top:425px"></i>
<i class="vb" style="top:440px"></i>
<i class="vb" style="top:455px"></i>
<i class="vb" style="top:470px"></i>
<i class="vb" style="top:485px"></i>
<i class="vb" style="top:500px"></i>
<i class="vb" style="top:515px"></i>
<i class="vb" style="top:530px"></i>
<i class="vb" style="top:545px"></i>
<i class="vb" style="top:560px"></i>
<i class="vb" style="top:575px"></i>
<i class="vb" style="top:590px"></i>
<i class="vb" style="top:605px"></i>
<i class="vb" style="top:620px"></i>
<i class="vb" style="top:635px"></i>
<i class="vb" style="top:650px"></i>
<i class="vb" style="top:665px"></i>
<i class="vb" style="top:680px"></i>
<i class="vb" style="top:695px"></i>
<i class="vb" style="top:710px"></i>
<i class="vb" style="top:725px"></i>
<i class="vb" style="top:740px"></i>
<i class="vb" style="top:755px"></i>
<i class="vb" style="top:770px"></i>
<i class="vb" style="top:785px"></i>
<i class="vb" style="top:800px"></i>
<i class="vb" style="top:815px"></i>
<i class="vb" style="top:830px"></i>
<i class="vb" style="top:845px"></i>
<i class="vb" style="top:860px"></i>
<i class="vb" style="top:875px"></i>
<i class="vb" style="top:890px"></i>
<i class="vb" style="top:905px"></i>
<i class="vb" style="top:920px"></i>
<i class="vb" style="top:935px"></i>
<i class="vb" style="top:950px"></i>
<i class="vb" style="top:965px"></i>
<i class="vb" style="top:980px"></i>
<div class="tr" style="top:124px"><span class="m">File Edit Options Buffers Tools Occur Help</span></div>
<div class="tr" style="top:139px">  <span class="h">Package</span>            <span class="h">Version</span>       <span class="h">Status [v]</span> <span class="h">Archive</span>    <span class="h">Description</span>                                    <span class="g">   3056:</span>  <span class="l">ob-http</span>    20180707.1448 available  melpa      http request in <span class="hk">org</span>-mode babel</div>
<div class="tr" style="top:154px">  <span class="l">undo-tree</span>          0.7.4         available  gnu        Treat undo history as a tree                   <span class="g">   3057:</span>  <span class="l">ob-hy</span>      20180702.540  available  melpa      <span class="hk">org</span>-babel functions for Hy-lang evaluation</div>
<div class="tr" style="top:169px">  <span class="l">undohist</span>           20200120.1328 available  melpa      Persistent undo history for GNU Emacs          <span class="g">   3058:</span>  <span class="l">ob-ipython</span> 20180224.953  available  melpa      <span class="hk">org</span>-babel functions for IPython evaluation</div>
<div class="tr" style="top:184px">  <span class="l">unfill</span>             20200304.2218 available  melpa      Do the opposite of fill-paragraph or fill-reg$ <span class="g">   3059:</span>  <span class="l">ob-kotlin</span>  20180823.1321 available  melpa      <span class="hk">org</span>-babel functions for kotlin evaluation</div>
<div class="tr" style="top:199px">  <span class="l">uni-confusables</span>    0.1           available  gnu        Unicode confusables table                      <span class="g">   3060:</span>  <span class="l">ob-lfe</span>     20170725.1420 available  melpa      <span class="hk">org</span>-babel functions for lfe evaluation</div>
<div class="tr" style="top:214px">  <span class="l">unicode-emoticons</span>  20150204.1108 available  melpa      Shortcuts for common unicode emoticons         <span class="g">   3061:</span>  <span class="l">ob-mermaid</span> 20200320.1504 available  melpa      <span class="hk">org</span>-babel support for mermaid evaluation</div>
<div class="tr" style="top:229px">  <span class="l">unicode-enbox</span>      20140508.2041 available  melpa      Surround a string with box-drawing characters  <span class="g">   3062:</span>  <span class="l">ob-ml-marklogic</span> 20190312.1314 available melpa  <span class="hk">org</span>-babel functions for MarkLogic evaluation</div>
<div class="tr" style="top:244px">  <span class="l">unicode-escape</span>     20160614.1234 available  melpa      Escape/Unescape unicode notations              <span class="g">   3063:</span>  <span class="l">ob-mongo</span>   20170720.1919 available  melpa      Execute mongodb queries within <span class="hk">org</span>-mode block\</div>
<div class="tr" style="top:259px">  <span class="l">unicode-fonts</span>      20181001.1509 available  melpa      Configure Unicode fonts                        s.</div>
<div class="tr" style="top:274px">  <span class="l">unicode-input</span>      20141219.720  available  melpa      Support for unicode character input            <span class="g">   3065:</span>  <span class="l">ob-prolog</span>  20190410.2130 available  melpa      <span class="hk">org</span>-babel functions for prolog evaluation.</div>
<div class="tr" style="top:289px">  <span class="l">unicode-math-input</span> 20190813.1436 available  melpa      Insert Unicode math symbols using TeX notatio$ <span class="g">   3066:</span>  <span class="l">ob-restclient</span> 20200316.759 available melpa     <span class="hk">org</span>-babel functions for restclient-mode</div>
<div class="tr" style="top:304px">  <span class="l">unicode-progres...</span> 20140508.2041 available  melpa      Progress-reporter with fancy characters        <span class="g">   3067:</span>  <span class="l">ob-rust</span>    20180911.1535 available  melpa      <span class="hk">Org</span>-babel functions for Rust</div>
<div class="tr" style="top:319px">  <span class="l">unicode-troll-s...</span> 20190209.411  available  melpa      Minor mode for Highlighting Unicode homoglyph$ <span class="g">   3068:</span>  <span class="l">ob-sagemath</span> 20191106.828 available  melpa      <span class="hk">org</span>-babel functions for SageMath evaluation</div>
<div class="tr" style="top:334px">  <span class="l">unicode-whitespace</span> 20140508.2041 available  melpa      teach whitespace-mode about fancy characters   <span class="g">   3069:</span>  <span class="l">ob-sml</span>     20130829.1843 available  melpa      <span class="hk">org</span>-babel functions for template evaluation</div>
<div class="tr" style="top:349px">  <span class="l">unidecode</span>          20180312.1926 available  melpa      Transliterate Unicode to ASCII                 <span class="g">   3072:</span>  <span class="l">ob-swift</span>   20170921.1325 available  melpa      <span class="hk">org</span>-babel functions for swift evaluation</div>
<div class="tr" style="top:364px">  <span class="l">unify-opening</span>      20171122.2012 available  melpa      Unify the mechanism to open files              <span class="g">   3074:</span>  <span class="l">ob-translate</span> 20170720.1919 available melpa     Translation of text blocks in <span class="hk">org</span>-mode.</div>
<div class="tr" style="top:379px">  <span class="l">unipoint</span>           20140113.2224 available  melpa      a simple way to insert unicode characters by $ <span class="g">   3075:</span>  <span class="l">ob-typescript</span> 20190910.946 available melpa     <span class="hk">org</span>-babel functions for typescript evaluation</div>
<div class="tr" style="top:394px">  <span class="l">uniquify-files</span>     1.0.2         available  gnu        Completion style for files, minimizing direct$ <span class="g">   3076:</span>  <span class="l">ob-uart</span>    20170521.858  available  melpa      <span class="hk">org</span>-babel support for UART communication</div>
<div class="tr" style="top:409px">  <span class="l">unison</span>             20160704.740  available  melpa      sync with Unison                               <span class="g">   3092:</span>  <span class="l">oer-reveal</span> 20200402.1611 available  melpa      OER with reveal.js, plugins, and <span class="hk">org</span>-re-revea\</div>
<div class="tr" style="top:424px">  <span class="l">unison-mode</span>        20160513.1501 available  melpa      Syntax highlighting for unison file synchroni$ l</div>
<div class="tr" style="top:439px">  <span class="l">universal-emoti...</span> 20180729.1941 available  melpa      Emoticons For The Six Universal Expressions    <span class="g">   3123:</span>  <span class="l">orca</span>       20200122.1511 available  melpa      <span class="hk">Org</span> Capture</div>
<div class="tr" style="top:454px">  <span class="l">unkillable-scratch</span> 20190309.17   available  melpa      Disallow the \*scratch\* buffer from being ki$ <span class="g">   3125:</span>  <span class="hk">org</span>        9.3.6         available  gnu        Outline-based notes management and <span class="hk">org</span>anizer</div>
<div class="tr" style="top:469px">  <span class="l">untitled-new-bu...</span> 20161212.1508 available  melpa      Open untitled new buffer like other text edit$ <span class="g">   3126:</span>  <span class="hk">org</span>        20200406      available  <span class="hk">org</span>        Outline-based notes management and <span class="hk">org</span>anizer</div>
<div class="tr" style="top:484px">  <span class="l">upbo</span>               20180422.822  available  melpa      Karma Test Runner Integration                  <span class="g">   3127:</span>  <span class="hk">org</span><span class="l">-ac</span>     20170401.1307 available  melpa      Some auto-complete sources for <span class="hk">org</span>-mode</div>
<div class="tr" style="top:499px">  <span class="l">uptimes</span>            20191121.1030 available  melpa      Track and display Emacs session uptimes.       <span class="g">   3128:</span>  <span class="hk">org</span><span class="l">-agenda-prop...</span> 20140626.2116 available melpa Display <span class="hk">org</span> properties in the agenda buffer\</div>
<div class="tr" style="top:514px">  <span class="l">url-http-ntlm</span>      2.0.4         available  gnu        NTLM authentication for the url library        .</div>
<div class="tr" style="top:529px">  <span class="l">url-shortener</span>      20170805.242  available  melpa      shorten long url and expand tinyurl            <span class="g">   3129:</span>  <span class="hk">org</span><span class="l">-alert</span>  20180524.133  available  melpa      Notify <span class="hk">org</span> deadlines via notify-send</div>
<div class="tr" style="top:544px">  <span class="l">urlenc</span>             20140116.1456 available  melpa      URL encoding/decoding utility for Emacs.       <span class="g">   3130:</span>  <span class="hk">org</span><span class="l">-analyzer</span> 20191001.1717 available melpa     <span class="hk">org</span>-analyzer is a tool that extracts time tra\</div>
<div class="tr" style="top:559px">  <span class="l">urscript-mode</span>      20190219.1604 available  melpa      major mode for editing URScript.               cking data from <span class="hk">org</span> files.</div>
<div class="tr" style="top:574px">  <span class="l">usage-memo</span>         20170926.37   available  melpa      integration of Emacs help system and memo      <span class="g">   3131:</span>  <span class="hk">org</span><span class="l">-attach-scre...</span> 20180420.525 available melpa screenshots integrated with <span class="hk">org</span> attachment d\</div>
<div class="tr" style="top:589px">  <span class="l">use-package-chords</span> 20181024.2322 available  melpa      key-chord keyword for use-package              irs</div>
<div class="tr" style="top:604px">  <span class="l">use-package-el-get</span> 20180131.505  available  melpa      el-get support for use package                 <span class="g">   3132:</span>  <span class="hk">org</span><span class="l">-autolist</span> 20170924.1901 available melpa     Improved list management in <span class="hk">org</span>-mode</div>
<div class="tr" style="top:619px">  <span class="l">use-package-ens...</span> 20180913.1501 available  melpa      auto install system packages                   <span class="g">   3133:</span>  <span class="hk">org</span><span class="l">-babel-eval-...</span> 20191204.18 available melpa Eval <span class="hk">org</span>-mode babel code blocks in various RE\</div>
<div class="tr" style="top:634px">  <span class="l">use-package-hydra</span>  20181228.745  available  melpa      Adds :hydra keyword to use-package macro       PLs.</div>
<div class="tr" style="top:649px">  <span class="l">use-ttf</span>            20190823.939  available  melpa      Keep font consistency across different OSs.    <span class="g">   3134:</span>  <span class="hk">org</span><span class="l">-beautify-theme</span> 20170908.2218 available melpa A sub-theme to make <span class="hk">org</span>-mode more beautiful\</div>
<div class="tr" style="top:664px">  <span class="l">usql</span>               20180305.2323 available  melpa      U-SQL support for sql-mode                     .</div>
<div class="tr" style="top:679px">  <span class="l">utop</span>               20190715.1836 available  melpa      Universal toplevel for OCaml                   <span class="g">   3135:</span>  <span class="hk">org</span><span class="l">-board</span>  20190203.1424 available  melpa      bookmarking and web archival system for <span class="hk">Org</span> m\</div>
<div class="tr" style="top:694px">  <span class="l">uuid</span>               20120910.851  available  melpa      UUID's for EmacsLisp                           ode.</div>
<div class="tr" style="top:709px">  <span class="l">uuidgen</span>            20200223.509  available  melpa      Provides various UUID generating functions     <span class="g">   3136:</span>  <span class="hk">org</span><span class="l">-bookmark-he...</span> 20200103.514 available melpa Emacs bookmark support for <span class="hk">org</span>-mode</div>
<div class="tr" style="top:724px">  <span class="l">v2ex-mode</span>          20160720.345  available  melpa      Major mode for visit http://v2ex.com/ site.    <span class="g">   3137:</span>  <span class="hk">org</span><span class="l">-brain</span>  20200402.1923 available  melpa      <span class="hk">Org</span>-mode concept mapping</div>
<div class="tr" style="top:739px">  <span class="l">vagrant</span>            20170301.2206 available  melpa      Manage a vagrant box from emacs                <span class="g">   3138:</span>  <span class="hk">org</span><span class="l">-bullets</span> 20200317.1740 available melpa      Show bullets in <span class="hk">org</span>-mode as UTF-8 characters</div>
<div class="tr" style="top:754px">  <span class="l">vagrant-tramp</span>      20200118.2324 available  melpa      Vagrant method for TRAMP                       <span class="g">   3139:</span>  <span class="hk">org</span><span class="l">-caldav</span> 20191024.724  available  melpa      Sync <span class="hk">org</span> files with external calendar through\</div>
<div class="tr" style="top:769px">  <span class="l">vala-mode</span>          20150324.2225 available  melpa      Vala mode derived mode                          CalDAV</div>
<div class="tr" style="top:784px">  <span class="l">vala-snippets</span>      20150429.352  available  melpa      Yasnippets for Vala                            <span class="g">   3140:</span>  <span class="hk">org</span><span class="l">-capture-pop...</span> 20160518.1008 available melpa Run <span class="hk">org</span>-capture in a new pop frame</div>
<div class="tr" style="top:799px">  <span class="l">vale-mode</span>          20190725.125  available  melpa      Major mode for writing Vale vaf files          <span class="g">   3141:</span>  <span class="hk">org</span><span class="l">-category-ca...</span> 20200329.313 available melpa Contextualy capture of <span class="hk">org</span>-mode TODOs.</div>
<div class="tr" style="top:814px">  <span class="l">validate</span>           1.0.4         available  gnu        Schema validation for Emacs-lisp               <span class="g">   3142:</span>  <span class="hk">org</span><span class="l">-chef</span>   20200220.2016 available  melpa      Cookbook and recipe management with <span class="hk">org</span>-mode.</div>
<div class="tr" style="top:829px">  <span class="l">vbasense</span>           20140221.2353 available  melpa      provide a environment like Visual Basic Edito$ <span class="g">   3143:</span>  <span class="hk">org</span><span class="l">-cliplink</span> 20190608.2134 available melpa     insert <span class="hk">org</span>-mode links from the clipboard</div>
<div class="tr" style="top:844px">  <span class="l">vc-auto-commit</span>     20170107.1333 available  melpa      Auto-committing feature for your repository    <span class="g">   3144:</span>  <span class="hk">org</span><span class="l">-clock-conve...</span> 20200123.1029 available melpa convenience functions for <span class="hk">org</span> time tracking</div>
<div class="tr" style="top:859px">  <span class="l">vc-check-status</span>    20170107.1334 available  melpa      Warn you when quitting emacs and leaving repo$ <span class="g">   3145:</span>  <span class="hk">org</span><span class="l">-clock-csv</span> 20190418.1505 available melpa    Export `<span class="hk">org</span>-mode' clock entries to CSV format\</div>
<div class="tr" style="top:874px">  <span class="l">vc-darcs</span>           20170905.320  available  melpa      a VC backend for darcs                         .</div>
<div class="tr" style="top:889px">  <span class="l">vc-fossil</span>          20180215.1635 available  melpa      VC backend for the fossil sofware configurait$ <span class="g">   3146:</span>  <span class="hk">org</span><span class="l">-clock-split</span> 20200331.526 available melpa   Split clock entries</div>
<div class="tr" style="top:904px">  <span class="l">vc-hgcmd</span>           20191223.1331 available  melpa      VC mercurial backend that uses hg command ser$ <span class="g">   3147:</span>  <span class="hk">org</span><span class="l">-clock-today</span> 20191204.1558 available melpa  Show total clocked time of the current day in\</div>
<div class="tr" style="top:919px">  <span class="l">vc-msg</span>             20191128.1010 available  melpa      Show commit <span class="l">information</span> of current line         the mode line</div>
<div class="tr" style="top:934px">  <span class="l">vc-osc</span>             20190402.2349 available  melpa      non-resident support for osc version-control   <span class="g">   3148:</span>  <span class="hk">org</span><span class="l">-commentary</span> 20160802.637 available melpa    generate or update conventional library heade\</div>
<div class="tr" style="top:949px">  <span class="l">vcl-mode</span>           1.1           available  gnu        Major mode for Varnish Configuration Language  rs using <span class="hk">Org</span> mode files</div>
<div class="tr" style="top:964px">  <span class="l">vcomp</span>              20190128.20   available  melpa      compare version strings                        <span class="g">   3149:</span>  <span class="hk">org</span><span class="l">-context</span> 20200217.1006 available melpa      Contextual capture and agenda commands for <span class="hk">Or</span>\</div>
<div class="tr" style="top:979px"><span class="m">-UUU:%%--F1  *Packages*     92% L4461  (Package Menu) -------------------------------------------------</span> <span class="m">-UUU:%%--F1  *Occur*        26% L79    (Occur) --------------------------------------------------------</span></div>
<div class="a" style="left:6px;top:1025px;font-size:11px;line-height:13px;white-space:nowrap"><b style="letter-spacing:-0.25px">UNREGISTERED VERSION</b>&nbsp; -&nbsp; <span style="letter-spacing:-0.12px">Please support MobaXterm by subscribing to the professional edition here:</span>&nbsp; <span style="color:#0000ee;letter-spacing:0.15px">https://mobaxterm.mobatek.net</span></div>
</body></html>
